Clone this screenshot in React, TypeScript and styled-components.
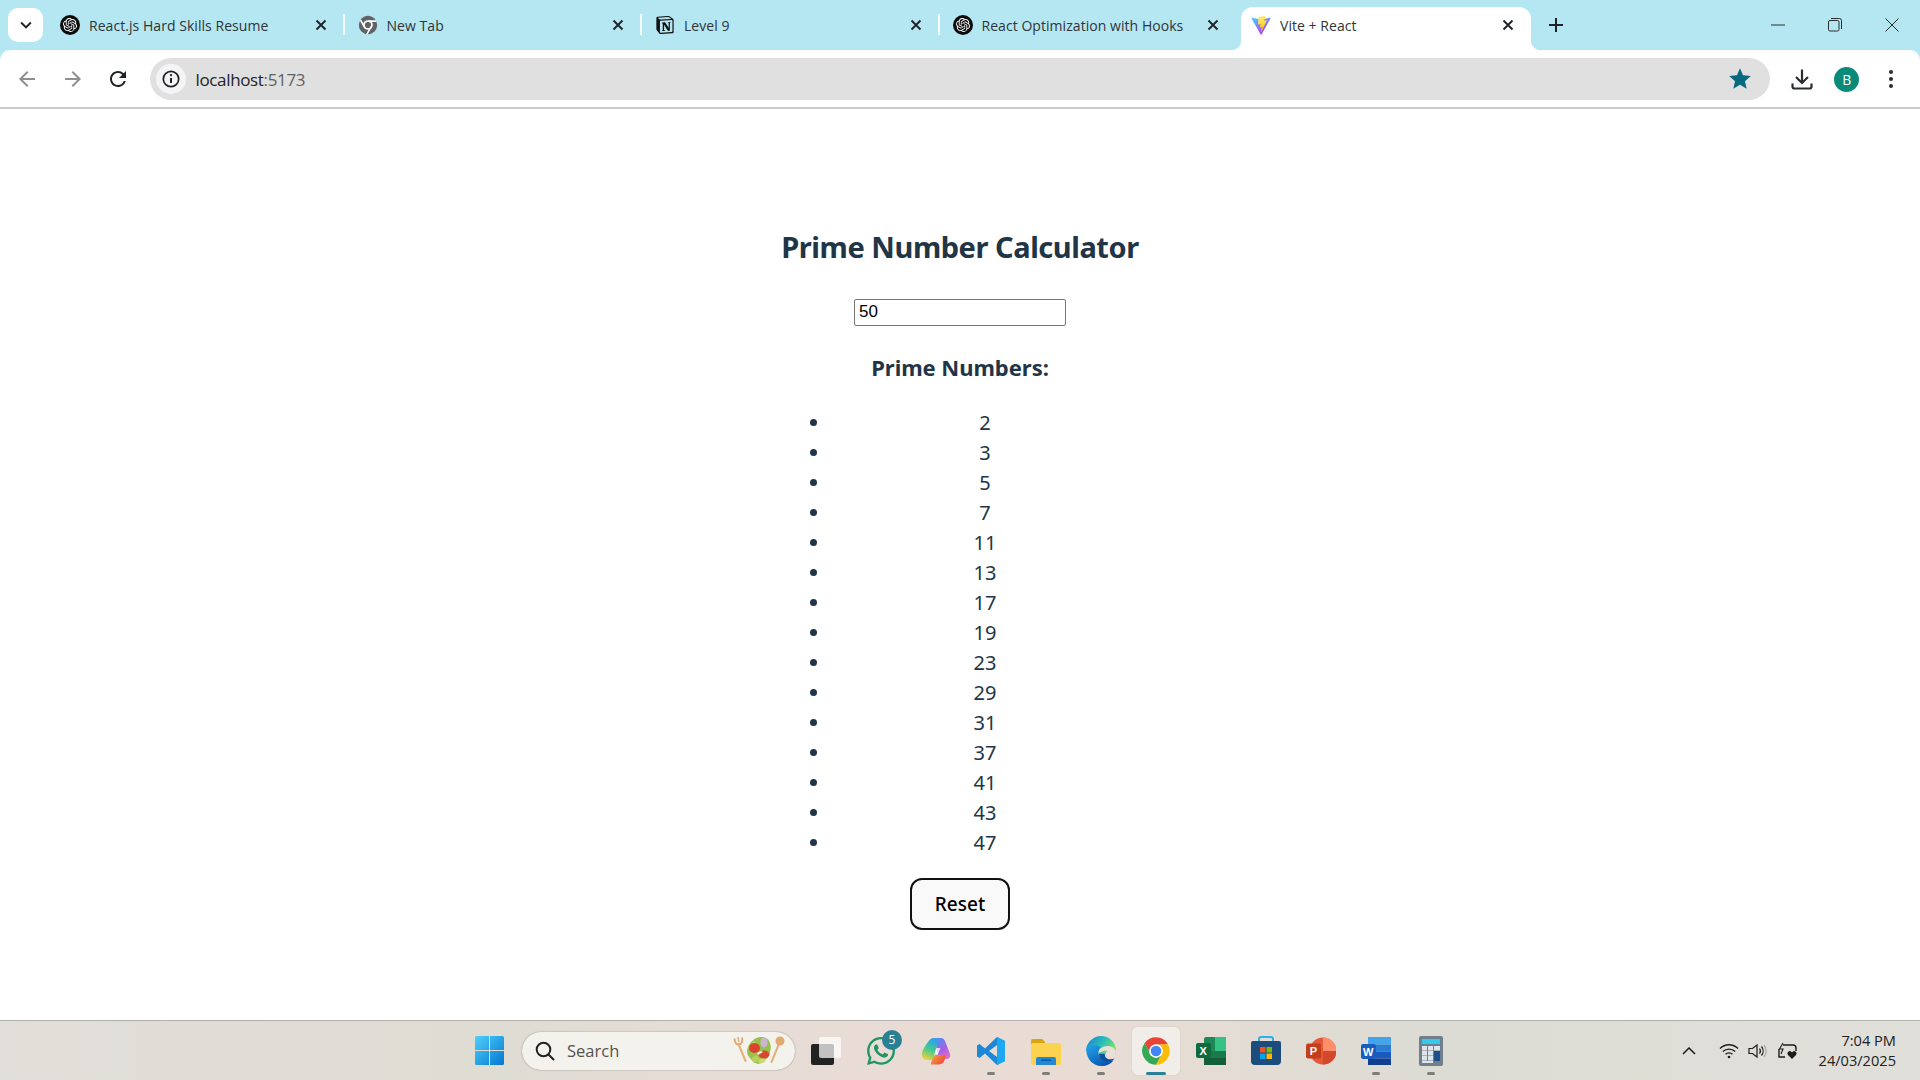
import React from "react";
import styled, { createGlobalStyle } from "styled-components";
import { SiOpenai, SiNotion } from "react-icons/si";
import { FaWhatsapp } from "react-icons/fa";

const Global = createGlobalStyle`
  html, body { margin: 0; padding: 0; background: #fff; }
  body { font-family: "Open Sans", "Noto Sans", sans-serif; }
  #root { height: 1080px; width: 1920px; overflow: hidden; }
`;

const Screen = styled.div`
  width: 1920px;
  height: 1080px;
  display: flex;
  flex-direction: column;
  background: #b5e7f3;
`;

/* ---------- tab strip ---------- */
const TabStrip = styled.div`
  height: 50px;
  flex: none;
  display: flex;
  align-items: flex-start;
  padding-left: 8px;
`;
const TabSearch = styled.div`
  width: 35px;
  height: 34px;
  margin-top: 8px;
  margin-right: 4px;
  border-radius: 10px;
  background: #fff;
  display: flex;
  align-items: center;
  justify-content: center;
`;
const Tab = styled.div<{ $active?: boolean; $sep?: boolean }>`
  position: relative;
  width: 297.5px;
  flex: none;
  box-sizing: border-box;
  height: ${(p) => (p.$active ? "43px" : "36px")};
  margin-top: 7px;
  padding: 0 13px;
  display: flex;
  align-items: center;
  color: #2f3437;
  font-size: 14px;
  letter-spacing: 0.05px;
  ${(p) =>
    p.$active
      ? `
    background: #fff;
    border-radius: 12px 12px 0 0;
    margin-left: 4px;
    width: 290px;
    padding-left: 10px;
    padding-right: 12px;
    padding-bottom: 7px;
    &::before, &::after {
      content: "";
      position: absolute;
      bottom: 0;
      width: 10px;
      height: 10px;
      background: radial-gradient(circle at var(--cx) 0, transparent 10px, #fff 10.5px);
    }
    &::before { left: -10px; --cx: 0; }
    &::after { right: -10px; --cx: 100%; }
  `
      : ""}
  ${(p) =>
    p.$sep
      ? `
    &::after {
      content: "";
      position: absolute;
      right: 0;
      top: 7px;
      width: 2px;
      height: 21px;
      background: #f2fbfd;
    }
  `
      : ""}
`;
const Favicon = styled.span`
  width: 20px;
  height: 20px;
  flex: none;
  display: flex;
  align-items: center;
  justify-content: center;
  margin-right: 9px;
`;
const GptBadge = styled.span`
  width: 20px;
  height: 20px;
  border-radius: 50%;
  background: #0c0c0c;
  color: #fff;
  display: flex;
  align-items: center;
  justify-content: center;
`;
const TabTitle = styled.span`
  flex: 1;
  white-space: nowrap;
  overflow: hidden;
`;
const TabClose = styled.span`
  width: 16px;
  height: 16px;
  flex: none;
  margin-right: 3px;
  color: #1f2327;
  display: flex;
`;
const NewTab = styled.div`
  width: 24px;
  height: 36px;
  margin-left: 13px;
  margin-top: 7px;
  box-sizing: border-box;
  display: flex;
  align-items: center;
  justify-content: center;
`;
const WindowControls = styled.div`
  margin-left: auto;
  display: flex;
  height: 50px;
`;
const WinButton = styled.div`
  width: 57px;
  height: 50px;
  display: flex;
  align-items: center;
  justify-content: center;
`;

/* ---------- toolbar ---------- */
const Toolbar = styled.div`
  height: 59px;
  flex: none;
  box-sizing: border-box;
  background: #fff;
  border-bottom: 2px solid #c9c9c9;
  border-radius: 10px 10px 0 0;
  display: flex;
  align-items: center;
  padding: 1px 0 0 10px;
`;
const NavButton = styled.div<{ $dim?: boolean }>`
  width: 34px;
  height: 34px;
  margin-right: 11.5px;
  flex: none;
  display: flex;
  align-items: center;
  justify-content: center;
  color: ${(p) => (p.$dim ? "#8d8f91" : "#1f2327")};
`;
const Omnibox = styled.div`
  flex: 1;
  height: 42px;
  margin-left: 3px;
  border-radius: 21px;
  background: #e0e0e0;
  display: flex;
  align-items: center;
  padding: 0 17px 0 6px;
`;
const InfoChip = styled.div`
  width: 30px;
  height: 30px;
  border-radius: 50%;
  background: #f4f4f4;
  display: flex;
  align-items: center;
  justify-content: center;
  margin-right: 10px;
`;
const Url = styled.div`
  flex: 1;
  font-size: 17px;
  letter-spacing: -0.35px;
  color: #1f2327;
`;
const UrlPort = styled.span`
  color: #5e6265;
`;
const ToolActions = styled.div`
  width: 150px;
  flex: none;
  display: flex;
  align-items: center;
  padding-left: 10px;
  box-sizing: border-box;
`;
const ActionSlot = styled.div`
  width: 44.5px;
  display: flex;
  justify-content: center;
  align-items: center;
`;
const Avatar = styled.div`
  width: 25px;
  height: 25px;
  border-radius: 50%;
  background: #0a8a78;
  color: #fff;
  font-size: 14px;
  display: flex;
  align-items: center;
  justify-content: center;
`;

/* ---------- page ---------- */
const Page = styled.main`
  flex: 1;
  background: #fff;
  color: #213547;
  display: flex;
  flex-direction: column;
  align-items: center;
  padding-top: 118px;
  font-family: "Noto Sans", "Open Sans", sans-serif;
`;
const Title = styled.h1`
  margin: 0;
  font-size: 29px;
  line-height: 40px;
  font-weight: 700;
  letter-spacing: -0.45px;
`;
const NumberInput = styled.input`
  margin-top: 32px;
  width: 212px;
  height: 27px;
  box-sizing: border-box;
  border: 1px solid #767676;
  border-radius: 2px;
  padding: 1px 4px 3px;
  font: 17px "Liberation Sans", Arial, sans-serif;
  color: #000;
  background: #fff;
  outline: none;
`;
const SubTitle = styled.h2`
  margin: 27px 0 0;
  font-size: 22px;
  line-height: 28px;
  font-weight: 700;
  letter-spacing: -0.04px;
`;
const PrimeList = styled.ul`
  margin: 27px 0 0;
  padding: 0 0 0 50px;
  width: 358px;
  box-sizing: border-box;
  list-style: disc;
  font-size: 20px;
  line-height: 30px;
`;
const PrimeItem = styled.li`
  text-align: center;
`;
const ResetButton = styled.button`
  margin-top: 20px;
  width: 100px;
  height: 52px;
  border: 2.5px solid #111;
  border-radius: 12px;
  background: #f9f9f9;
  color: #000;
  font-family: "Noto Sans", sans-serif;
  font-size: 19px;
  font-weight: 500;
  padding: 0;
`;

/* ---------- taskbar ---------- */
const Taskbar = styled.footer`
  height: 60px;
  flex: none;
  box-sizing: border-box;
  border-top: 1px solid #b3b1ad;
  background: linear-gradient(90deg, #e0ded8 0%, #dfdcd4 25%, #e9dcd6 45%, #e8dcd5 58%, #dcdcd4 75%, #e1dfda 100%);
  display: grid;
  grid-template-columns: 1fr auto 1fr;
  align-items: center;
`;
const TaskCenter = styled.div`
  grid-column: 2;
  display: flex;
  align-items: center;
  gap: 7px;
`;
const TaskItem = styled.div<{ $active?: boolean }>`
  position: relative;
  width: 48px;
  height: 48px;
  display: flex;
  align-items: center;
  justify-content: center;
  border-radius: 5px;
  background: ${(p) => (p.$active ? "#f1eee9" : "transparent")};
  box-shadow: ${(p) => (p.$active ? "0 0 1px rgba(0,0,0,.25)" : "none")};
`;
const RunDot = styled.span<{ $active?: boolean }>`
  position: absolute;
  left: 50%;
  bottom: 0;
  transform: translateX(-50%);
  width: ${(p) => (p.$active ? "20px" : "8px")};
  height: 3px;
  border-radius: 2px;
  background: ${(p) => (p.$active ? "#2a8095" : "#7d7d7b")};
`;
const CountBadge = styled.span`
  position: absolute;
  top: 3px;
  right: 3px;
  width: 20px;
  height: 20px;
  border-radius: 50%;
  background: #2a8095;
  color: #fff;
  font-size: 12px;
  display: flex;
  align-items: center;
  justify-content: center;
`;
const SearchPill = styled.div`
  width: 273px;
  height: 38px;
  margin-left: 2px;
  box-sizing: border-box;
  border-radius: 19px;
  background: #f4f2ed;
  box-shadow: 0 0 1.5px rgba(0, 0, 0, 0.45);
  display: flex;
  align-items: center;
  padding: 0 10px 0 13px;
  color: #55534f;
  font-size: 16.5px;
`;
const SearchLabel = styled.span`
  flex: 1;
  margin-left: 12px;
`;
const Tray = styled.div`
  grid-column: 3;
  justify-self: end;
  display: flex;
  align-items: center;
  padding-right: 24px;
  color: #1c1c1c;
`;
const TrayIcons = styled.div`
  display: flex;
  align-items: center;
  gap: 9px;
  margin-right: 20px;
`;
const TrayChevron = styled.div`
  margin-right: 23px;
  display: flex;
`;
const Clock = styled.div`
  text-align: right;
  font-size: 14.6px;
  line-height: 20px;
  margin-top: -2px;
  color: #222;
`;

/* ---------- icons ---------- */
const CloseX = () => (
  <svg viewBox="0 0 16 16" width="16" height="16" fill="none" stroke="currentColor" strokeWidth="1.9">
    <path d="M3.5 3.5l9 9M12.5 3.5l-9 9" />
  </svg>
);
const ChromeGray = () => (
  <svg viewBox="0 0 48 48" width="20" height="20">
    <circle cx="24" cy="24" r="22" fill="#5f6368" />
    <circle cx="24" cy="24" r="11.5" fill="#fff" />
    <circle cx="24" cy="24" r="7.5" fill="#5f6368" />
    <path d="M24 12.5h19l1 4H24zM14 30L4.5 13.5l3-2.5L17 27zM33 29l-9.500 17-4-.5L30 27z" fill="#fff" />
  </svg>
);
const ViteLogo = () => (
  <svg viewBox="0 0 410 404" width="21" height="21">
    <defs>
      <linearGradient id="vt1" x1="0" y1="0" x2="0.6" y2="1">
        <stop offset="0" stopColor="#41d1ff" />
        <stop offset="1" stopColor="#bd34fe" />
      </linearGradient>
      <linearGradient id="vt2" x1="0.3" y1="0" x2="0.5" y2="1">
        <stop offset="0" stopColor="#ffea83" />
        <stop offset="0.5" stopColor="#ffdd35" />
        <stop offset="1" stopColor="#ffa800" />
      </linearGradient>
    </defs>
    <path d="M399.6 59.5L215.9 388.2c-3.800 6.800-13.500 6.800-17.400.1L11.200 59.500c-4.200-7.400 2.100-16.300 10.400-14.800l183.900 32.900c1.200.2 2.400.2 3.500 0l180-32.800c8.300-1.500 14.700 7.300 10.600 14.700z" fill="url(#vt1)" />
    <path d="M292.900 1.600L156.900 28.300c-2.200.4-3.900 2.300-4 4.600l-8.400 141.500c-.2 3.300 2.900 5.900 6.100 5.200l37.900-8.700c3.500-.8 6.700 2.300 6 5.900l-11.300 55.200c-.8 3.700 2.700 6.900 6.300 5.800l23.400-7.100c3.600-1.100 7.100 2.100 6.300 5.800l-17.900 86.500c-1.100 5.400 6.100 8.400 9.100 3.700l2-3.100 110.900-221.300c1.900-3.700-1.300-7.900-5.400-7.100l-39 7.500c-3.700.7-6.800-2.700-5.700-6.300l25.400-88.200c1.100-3.600-2.100-7.100-5.700-6.300z" fill="url(#vt2)" />
  </svg>
);
const Material = ({ d, size = 24, color = "currentColor" }: { d: string; size?: number; color?: string }) => (
  <svg viewBox="0 0 24 24" width={size} height={size} fill={color}>
    <path d={d} />
  </svg>
);
const InfoIcon = () => (
  <svg viewBox="0 0 20 20" width="20" height="20" fill="none" stroke="#1f2327" strokeWidth="1.7">
    <circle cx="10" cy="10" r="7.700" />
    <path d="M10 9v5" strokeWidth="2" />
    <circle cx="10" cy="6.200" r="1.100" fill="#1f2327" stroke="none" />
  </svg>
);
const DownloadIcon = () => (
  <svg viewBox="0 0 24 24" width="24" height="24" fill="none" stroke="#2a2d30" strokeWidth="2.200">
    <path d="M12 2.500v13M6 10l6 6 6-6" />
    <path d="M2.500 16.500v3a2 2 0 002 2h15a2 2 0 002-2v-3" />
  </svg>
);
const KebabIcon = () => (
  <svg viewBox="0 0 6 20" width="6" height="20" fill="#2a2d30">
    <circle cx="3" cy="3" r="2" />
    <circle cx="3" cy="10" r="2" />
    <circle cx="3" cy="17" r="2" />
  </svg>
);
const WinMin = () => (
  <svg viewBox="0 0 14 14" width="14" height="14" stroke="#2a2d30" strokeWidth="1">
    <path d="M0 7h14" />
  </svg>
);
const WinRestore = () => (
  <svg viewBox="0 0 14 14" width="14" height="14" fill="none" stroke="#2a2d30" strokeWidth="1">
    <rect x="0.500" y="2.500" width="10.500" height="10.500" rx="1.500" />
    <path d="M3 .5h8.500a2 2 0 012 2V11" />
  </svg>
);
const WinClose = () => (
  <svg viewBox="0 0 14 14" width="14" height="14" stroke="#2a2d30" strokeWidth="1">
    <path d="M.5.5l13 13M13.500.5l-13 13" />
  </svg>
);

const WindowsLogo = () => (
  <svg viewBox="0 0 29 29" width="29" height="29">
    <defs>
      <linearGradient id="wn" x1="0" y1="0" x2="1" y2="1">
        <stop offset="0" stopColor="#4fd0fb" />
        <stop offset="1" stopColor="#0476d0" />
      </linearGradient>
    </defs>
    <path d="M0 1.500A1.500 1.500 0 011.500 0H14v14H0zM15 0h12.500A1.500 1.500 0 0129 1.500V14H15zM0 15h14v14H1.500A1.500 1.500 0 010 27.500zM15 15h14v12.500a1.500 1.500 0 01-1.500 1.500H15z" fill="url(#wn)" />
  </svg>
);
const SearchLens = () => (
  <svg viewBox="0 0 20 20" width="20" height="20" fill="none" stroke="#222" strokeWidth="2">
    <circle cx="8.500" cy="8.500" r="6.800" />
    <path d="M13.500 13.500l5.500 5.500" />
  </svg>
);
const Salad = () => (
  <svg viewBox="0 0 52 34" width="52" height="34">
    <path d="M5.500 10l7 17" stroke="#e2b078" strokeWidth="2" strokeLinecap="round" />
    <path d="M1.500 4.500c0 4 2 6.500 4.500 6s4-3 3-7" fill="none" stroke="#e2a972" strokeWidth="2" />
    <path d="M5 3l.8 5" stroke="#e2a972" strokeWidth="1.500" />
    <path d="M45.500 11l-7 17" stroke="#e2b078" strokeWidth="2" strokeLinecap="round" />
    <ellipse cx="47" cy="7" rx="4.500" ry="4.500" fill="#e2a972" />
    <path d="M14 17c1-8 8-14 14-14 4 0 8 2 9 6 1 3 1 6 0 9-2 7-7 11-12 12-4-1-6-3-8-6-2-2-3-4-3-7z" fill="#98c04c" />
    <path d="M15 14l6-7 3 4-5 6zM25 26l8-4-1 6-6 2z" fill="#c6da6e" />
    <ellipse cx="21.500" cy="14" rx="5.500" ry="5" fill="#d8442e" />
    <ellipse cx="31" cy="20.500" rx="5.500" ry="4" fill="#d8482f" />
    <ellipse cx="31" cy="8.500" rx="3.500" ry="5" fill="#cdb6d0" />
    <path d="M18 24l6-3 3 5-6 3z" fill="#b9d05a" />
    <path d="M24 19l4-2 2 1-5 3z" fill="#f2eee2" />
  </svg>
);
const TaskView = () => (
  <svg viewBox="0 0 30 30" width="30" height="30">
    <rect x="0" y="8" width="23" height="21" rx="2" fill="#222" />
    <rect x="8" y="1" width="22" height="21" rx="2" fill="#fff" fillOpacity="0.72" />
  </svg>
);
const Copilot = () => (
  <svg viewBox="0 0 30 30" width="30" height="30">
    <defs>
      <linearGradient id="cpL" x1="0.6" y1="0" x2="0.3" y2="1">
        <stop offset="0" stopColor="#2a9ff0" />
        <stop offset="0.5" stopColor="#45cb8c" />
        <stop offset="1" stopColor="#f2d23c" />
      </linearGradient>
      <linearGradient id="cpR" x1="0.3" y1="0" x2="0.8" y2="1">
        <stop offset="0" stopColor="#4f8ff0" />
        <stop offset="0.5" stopColor="#a55fe8" />
        <stop offset="1" stopColor="#ea6cc0" />
      </linearGradient>
      <linearGradient id="cpB" x1="0" y1="0" x2="1" y2="0.6">
        <stop offset="0" stopColor="#f9a43a" />
        <stop offset="1" stopColor="#ec4c3e" />
      </linearGradient>
    </defs>
    <path d="M14 2h6c2 0 3.500 1.500 4 3l5 13c1 3-1 5-4 5h-7l-4-17z" fill="url(#cpR)" />
    <path d="M7 6C4 10 0 16 1 20c.5 3 3 4 5 4h6l4-15c.500-3-1-7-3-7-3 0-4.500 2-6 4z" fill="url(#cpL)" />
    <path d="M10 28.500h8c3 0 5-2.500 6-5.500l1-4H14l-3 5c-1 2-1 3.500-1 4.500z" fill="url(#cpB)" />
    <path d="M15.500 12h4L17 18h-3.500z" fill="#fff" fillOpacity="0.75" />
  </svg>
);
const VSCode = () => (
  <svg viewBox="0 0 30 30" width="30" height="30">
    <path fillRule="evenodd" d="M21 1L9 12.500 3.500 8 1 9.500v11L3.500 22 9 17.500 21 29l8-4V5zM21 9v12l-8-6z" fill="#1d86d6" />
    <path fillRule="evenodd" d="M21 1l8 4v20l-8 4V21z M21 1v8" fill="#1ea8f4" />
  </svg>
);
const Explorer = () => (
  <svg viewBox="0 0 30 30" width="30" height="30">
    <path d="M0 5a2 2 0 012-2h9l3 3h0v5H0z" fill="#d9a40e" />
    <path d="M0 9a2 2 0 012-2h26a2 2 0 012 2v18a2 2 0 01-2 2H2a2 2 0 01-2-2z" fill="#fcd34f" />
    <path d="M5 23a2 2 0 012-2h16a2 2 0 012 2v6H5z" fill="#2287d6" />
    <rect x="10" y="23.500" width="10" height="1.500" fill="#0b5aa5" />
  </svg>
);
const Edge = () => (
  <svg viewBox="0 0 30 30" width="30" height="30">
    <defs>
      <linearGradient id="eg1" x1="0.1" y1="0.2" x2="1" y2="0.6">
        <stop offset="0" stopColor="#1a8fd8" />
        <stop offset="0.55" stopColor="#30c4b0" />
        <stop offset="1" stopColor="#86e060" />
      </linearGradient>
      <linearGradient id="eg2" x1="0" y1="0" x2="0.8" y2="1">
        <stop offset="0" stopColor="#25a4e8" />
        <stop offset="0.6" stopColor="#1172c6" />
        <stop offset="1" stopColor="#0a4ea8" />
      </linearGradient>
    </defs>
    <path d="M15 0c8 0 15 6 15 15v3H12V12L0 15C0 7 7 0 15 0z" fill="url(#eg1)" />
    <path d="M.2 14C.5 23 7 30 15.500 30c5 0 9.500-2 12-6-3 1.500-8 1.500-11.500-1-4-3-5-8-1.500-12-4-3-13-2-14.300 3z" fill="url(#eg2)" />
    <path d="M12.500 17c0-4 4-7 9-7 4 0 7.500 2 8.500 6 .200 2-2 4-6 4-3 0-4-1-4-2.500 0-1 .5-2 1.500-2.500-4-1-8 2-9 2z" fill="#ebe0d9" />
    <path d="M13 18c0 5 5 8 10 7.500 2.500-.3 4.500-1.500 5.500-3-2 1-5.500 1.200-7.500 0-2-1.500-2.500-3-2-4.500-1.500-.5-4 0-6 0z" fill="#0e4f9e" />
  </svg>
);
const Chrome = () => (
  <svg viewBox="0 0 48 48" width="30" height="30">
    <path d="M24 2a22 22 0 0119.050 11L24 14l-8.700 15L5.950 11.300A22 22 0 0124 2z" fill="#ea4335" />
    <path d="M43.050 13A22 22 0 0124 46l9-17-9-15z" fill="#fbbc04" />
    <path d="M24 46A22 22 0 015.950 11.300L15.300 29 33 29z" fill="#34a853" />
    <circle cx="24" cy="24" r="11" fill="#fff" />
    <circle cx="24" cy="24" r="8.500" fill="#4285f4" />
  </svg>
);
const TileLetter = styled.text`
  font-family: "Liberation Sans", sans-serif;
  font-weight: 700;
  font-size: 11px;
  fill: #fff;
`;
const Excel = () => (
  <svg viewBox="0 0 30 30" width="30" height="30">
    <rect x="8" y="1" width="22" height="28" rx="2" fill="#1d8a55" />
    <rect x="19" y="1" width="11" height="14" fill="#35c384" />
    <rect x="8" y="15" width="22" height="7" fill="#1a7a4c" />
    <rect x="8" y="22" width="22" height="7" fill="#155e3a" />
    <rect x="0" y="7" width="15" height="15" rx="2" fill="#0f6b3f" />
    <TileLetter x="3.500" y="18.500">X</TileLetter>
  </svg>
);
const Store = () => (
  <svg viewBox="0 0 30 30" width="30" height="30">
    <path d="M8 7V3a2 2 0 012-2h10a2 2 0 012 2v4" fill="none" stroke="#27b3e6" strokeWidth="2" />
    <path d="M0 7a2 2 0 012-2h26a2 2 0 012 2v18a4 4 0 01-4 4H4a4 4 0 01-4-4z" fill="#1c4b7e" />
    <rect x="9" y="11" width="5.500" height="5.500" fill="#f25022" />
    <rect x="15.500" y="11" width="5.500" height="5.500" fill="#7fba00" />
    <rect x="9" y="17.500" width="5.500" height="5.500" fill="#00a4ef" />
    <rect x="15.500" y="17.500" width="5.500" height="5.500" fill="#ffb900" />
  </svg>
);
const PowerPoint = () => (
  <svg viewBox="0 0 30 30" width="30" height="30">
    <circle cx="17" cy="15" r="13.500" fill="#e4593a" />
    <path d="M17 1.500A13.500 13.500 0 0130.500 15H17z" fill="#ff8f6b" />
    <path d="M17 15h13.500A13.500 13.500 0 0117 28.500z" fill="#d2492c" />
    <rect x="0" y="7.500" width="15" height="15" rx="2" fill="#c43e1c" />
    <TileLetter x="3.800" y="19">P</TileLetter>
  </svg>
);
const Word = () => (
  <svg viewBox="0 0 30 30" width="30" height="30">
    <rect x="7" y="1" width="23" height="7.500" fill="#41a5ee" />
    <rect x="7" y="8.500" width="23" height="7" fill="#2b7cd3" />
    <rect x="7" y="15.500" width="23" height="7" fill="#185abd" />
    <rect x="7" y="22.500" width="23" height="6.500" fill="#103f91" />
    <rect x="0" y="8" width="15" height="15" rx="2" fill="#1a5dbd" />
    <TileLetter x="2" y="19.500">W</TileLetter>
  </svg>
);
const Calculator = () => (
  <svg viewBox="0 0 24 30" width="24" height="30">
    <rect x="0" y="0" width="24" height="30" rx="2" fill="#6f7f8c" />
    <rect x="3" y="3" width="18" height="5" fill="#35c9ee" />
    {[10, 15, 20].map((y) =>
      [3, 9].map((x) => <rect key={`${x}-${y}`} x={x} y={y} width="5" height="4.500" fill="#dfe5ea" />)
    )}
    <rect x="15" y="10" width="6" height="4.500" fill="#dfe5ea" />
    <rect x="15" y="15" width="6" height="10" fill="#1d4f8a" />
    <rect x="3" y="25" width="11" height="2" fill="#dfe5ea" />
  </svg>
);
const ChevronTray = () => (
  <svg viewBox="0 0 14 8" width="14" height="8" fill="none" stroke="#1c1c1c" strokeWidth="1.500">
    <path d="M1 7l6-6 6 6" />
  </svg>
);
const WifiIcon = () => (
  <svg viewBox="0 0 20 16" width="20" height="16" fill="none" stroke="#1c1c1c" strokeWidth="1.300">
    <path d="M1 5.500c5-5 13-5 18 0M3.800 8.500c3.500-3.300 9-3.300 12.400 0M6.500 11.300c2-1.800 5-1.800 7 0" />
    <circle cx="10" cy="14" r="1.300" fill="#1c1c1c" stroke="none" />
  </svg>
);
const SpeakerIcon = () => (
  <svg viewBox="0 0 20 16" width="20" height="16" fill="none" stroke="#1c1c1c" strokeWidth="1.200">
    <path d="M1 5.500h3.500L9 2v12l-4.500-3.500H1z" />
    <path d="M11.500 5.500a4 4 0 010 5M13.500 3.500a7 7 0 010 9" />
    <path d="M16 2a9.500 9.500 0 010 12" stroke="#aaa" />
  </svg>
);
const SyncHeartIcon = () => (
  <svg viewBox="0 0 22 18" width="22" height="18" fill="none" stroke="#1c1c1c" strokeWidth="1.400">
    <path d="M2 7v8h6M6 3h10a3 3 0 013 3v3" />
    <path d="M6 1L2.500 7H6l-2 5" strokeWidth="1.100" />
    <path d="M15 17l-4-4a2.300 2.300 0 013.500-3l.5.500.5-.5a2.300 2.300 0 013.500 3z" fill="#1c1c1c" stroke="none" />
  </svg>
);

const arrowBack = "M20 11H7.830l5.590-5.590L12 4l-8 8 8 8 1.410-1.410L7.830 13H20v-2z";
const arrowFwd = "M4 11h12.170l-5.590-5.590L12 4l8 8-8 8-1.410-1.410L16.170 13H4v-2z";
const refresh =
  "M17.650 6.350A7.958 7.958 0 0012 4c-4.420 0-7.990 3.580-7.990 8s3.570 8 7.990 8c3.730 0 6.840-2.550 7.730-6h-2.080A5.990 5.990 0 0112 18c-3.310 0-6-2.690-6-6s2.690-6 6-6c1.660 0 3.140.690 4.220 1.780L13 11h7V4l-2.350 2.350z";
const star =
  "M12 17.270L18.180 21l-1.640-7.030L22 9.240l-7.190-.610L12 2 9.190 8.630 2 9.240l5.460 4.730L5.820 21z";
const plus = "M19 13h-6v6h-2v-6H5v-2h6V5h2v6h6v2z";
const chevron = "M7.410 8.590L12 13.170l4.590-4.580L18 10l-6 6-6-6z";

const gpt = (
  <GptBadge>
    <SiOpenai size={14} />
  </GptBadge>
);
const tabs: { title: string; icon: React.ReactNode; sep?: boolean; active?: boolean }[] = [
  { title: "React.js Hard Skills Resume", icon: gpt, sep: true },
  { title: "New Tab", icon: <ChromeGray />, sep: true },
  { title: "Level 9", icon: <SiNotion size={18} color="#111" />, sep: true },
  { title: "React Optimization with Hooks", icon: gpt },
  { title: "Vite + React", icon: <ViteLogo />, active: true },
];
const primes = [2, 3, 5, 7, 11, 13, 17, 19, 23, 29, 31, 37, 41, 43, 47];
const apps: { icon: React.ReactNode; run?: boolean; active?: boolean }[] = [
  { icon: <VSCode />, run: true },
  { icon: <Explorer />, run: true },
  { icon: <Edge />, run: true },
  { icon: <Chrome />, run: true, active: true },
  { icon: <Excel /> },
  { icon: <Store /> },
  { icon: <PowerPoint /> },
  { icon: <Word />, run: true },
  { icon: <Calculator />, run: true },
];

export default function App() {
  return (
    <Screen>
      <Global />
      <TabStrip>
        <TabSearch>
          <Material d={chevron} size={22} color="#1f2327" />
        </TabSearch>
        {tabs.map((t) => (
          <Tab key={t.title} $active={t.active} $sep={t.sep}>
            <Favicon>{t.icon}</Favicon>
            <TabTitle>{t.title}</TabTitle>
            <TabClose>
              <CloseX />
            </TabClose>
          </Tab>
        ))}
        <NewTab>
          <Material d={plus} size={24} color="#1f2327" />
        </NewTab>
        <WindowControls>
          <WinButton>
            <WinMin />
          </WinButton>
          <WinButton>
            <WinRestore />
          </WinButton>
          <WinButton>
            <WinClose />
          </WinButton>
        </WindowControls>
      </TabStrip>
      <Toolbar>
        <NavButton $dim>
          <Material d={arrowBack} />
        </NavButton>
        <NavButton $dim>
          <Material d={arrowFwd} />
        </NavButton>
        <NavButton>
          <Material d={refresh} />
        </NavButton>
        <Omnibox>
          <InfoChip>
            <InfoIcon />
          </InfoChip>
          <Url>
            localhost<UrlPort>:5173</UrlPort>
          </Url>
          <Material d={star} size={26} color="#05687e" />
        </Omnibox>
        <ToolActions>
          <ActionSlot>
            <DownloadIcon />
          </ActionSlot>
          <ActionSlot>
            <Avatar>B</Avatar>
          </ActionSlot>
          <ActionSlot>
            <KebabIcon />
          </ActionSlot>
        </ToolActions>
      </Toolbar>
      <Page>
        <Title>Prime Number Calculator</Title>
        <NumberInput type="number" defaultValue={50} />
        <SubTitle>Prime Numbers:</SubTitle>
        <PrimeList>
          {primes.map((n) => (
            <PrimeItem key={n}>{n}</PrimeItem>
          ))}
        </PrimeList>
        <ResetButton>Reset</ResetButton>
      </Page>
      <Taskbar>
        <TaskCenter>
          <TaskItem>
            <WindowsLogo />
          </TaskItem>
          <SearchPill>
            <SearchLens />
            <SearchLabel>Search</SearchLabel>
            <Salad />
          </SearchPill>
          <TaskItem>
            <TaskView />
          </TaskItem>
          <TaskItem>
            <FaWhatsapp size={32} color="#1f9562" />
            <CountBadge>5</CountBadge>
          </TaskItem>
          <TaskItem>
            <Copilot />
          </TaskItem>
          {apps.map((a, i) => (
            <TaskItem key={i} $active={a.active}>
              {a.icon}
              {a.run && <RunDot $active={a.active} />}
            </TaskItem>
          ))}
        </TaskCenter>
        <Tray>
          <TrayChevron>
            <ChevronTray />
          </TrayChevron>
          <TrayIcons>
            <WifiIcon />
            <SpeakerIcon />
            <SyncHeartIcon />
          </TrayIcons>
          <Clock>
            7:04 PM
            <br />
            24/03/2025
          </Clock>
        </Tray>
      </Taskbar>
    </Screen>
  );
}
